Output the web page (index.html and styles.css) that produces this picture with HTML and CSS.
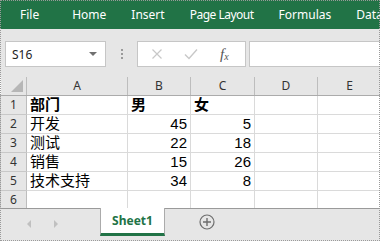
FILE: index.html
```html
<!DOCTYPE html>
<html lang="en">
<head>
	<meta charset="UTF-8">
	<title>Sheet1</title>
	<link rel="stylesheet" href="styles.css">
</head>
<body>
<div class="app">
	<nav class="ribbon">
		<span class="menu file">File</span>
		<span class="menu">Home</span>
		<span class="menu">Insert</span>
		<span class="menu tight">Page Layout</span>
		<span class="menu">Formulas</span>
		<span class="menu">Data</span>
	</nav>
	<section class="formula">
		<div class="namebox">
			<span>S16</span>
			<span class="caret"></span>
		</div>
		<div class="grip">
			<i></i><i></i><i></i>
		</div>
		<div class="fxbox">
			<svg width="12" height="12" viewBox="0 0 12 12"><path d="M1.5 1.5 L10.5 10.5 M10.5 1.5 L1.5 10.5" stroke="#c8c8c8" stroke-width="1.2" fill="none"/></svg>
			<svg width="14" height="12" viewBox="0 0 14 12"><path d="M1 6.5 L5 10.5 L13 1.5" stroke="#c8c8c8" stroke-width="1.4" fill="none"/></svg>
			<span class="fx">f<sub>x</sub></span>
		</div>
		<div class="input"></div>
	</section>
	<table class="sheet">
		<colgroup>
			<col class="c-row">
			<col class="c-a">
			<col class="c-b">
			<col class="c-c">
			<col class="c-d">
			<col class="c-e">
		</colgroup>
		<tr class="head">
			<th class="corner"><span class="tri"></span></th>
			<th>A</th><th>B</th><th>C</th><th>D</th><th>E</th>
		</tr>
		<tr>
			<th>1</th><td class="b">部门</td><td class="b">男</td><td class="b">女</td><td></td><td></td>
		</tr>
		<tr>
			<th>2</th><td>开发</td><td class="n">45</td><td class="n">5</td><td></td><td></td>
		</tr>
		<tr>
			<th>3</th><td>测试</td><td class="n">22</td><td class="n">18</td><td></td><td></td>
		</tr>
		<tr>
			<th>4</th><td>销售</td><td class="n">15</td><td class="n">26</td><td></td><td></td>
		</tr>
		<tr>
			<th>5</th><td>技术支持</td><td class="n">34</td><td class="n">8</td><td></td><td></td>
		</tr>
		<tr class="last">
			<th>6</th><td></td><td></td><td></td><td></td><td></td>
		</tr>
	</table>
	<footer class="tabs">
		<div class="arrows">
			<span class="arrow left"></span>
			<span class="arrow right"></span>
		</div>
		<div class="tab">Sheet1</div>
		<div class="add">
			<svg width="16" height="16" viewBox="0 0 16 16"><circle cx="8" cy="8" r="7" stroke="#6e6e6e" stroke-width="1.2" fill="none"/><path d="M8 4 V12 M4 8 H12" stroke="#6e6e6e" stroke-width="1.4"/></svg>
		</div>
	</footer>
</div>
</body>
</html>
```

FILE: styles.css
```css
body{
	margin: 0;
	font-family: "Noto Sans", "Liberation Sans", sans-serif;
}
.app{
	width: 380px;
	height: 241px;
	overflow: hidden;
	background-color: #e6e6e6;
	outline: 1px dotted #9a9a9a;
	outline-offset: -1px;
}
.ribbon{
	height: 29px;
	background-color: #217346;
	color: #fff;
	display: flex;
	align-items: center;
	font-size: 12px;
	white-space: nowrap;
	padding-left: 20px;
	gap: 25px;
}
.ribbon .file{
	margin-right: 8px;
}
.ribbon .tight{
	letter-spacing: -0.5px;
}
.formula{
	height: 48px;
	box-sizing: border-box;
	padding-top: 12px;
	display: flex;
	align-items: flex-start;
}
.namebox{
	margin-left: 5px;
	width: 101px;
	height: 26px;
	box-sizing: border-box;
	border: 1px solid #c6c6c6;
	background-color: #fff;
	display: flex;
	align-items: center;
	justify-content: space-between;
	padding: 0 8px 0 6px;
	font-size: 12px;
	color: #222;
}
.caret{
	width: 0;
	height: 0;
	border-left: 4px solid transparent;
	border-right: 4px solid transparent;
	border-top: 4px solid #707070;
}
.grip{
	width: 31px;
	height: 26px;
	display: flex;
	flex-direction: column;
	align-items: center;
	justify-content: center;
	gap: 2px;
}
.grip i{
	width: 2px;
	height: 2px;
	background-color: #9a9a9a;
}
.fxbox{
	width: 109px;
	height: 26px;
	box-sizing: border-box;
	border: 1px solid #c6c6c6;
	background-color: #fff;
	display: flex;
	align-items: center;
	padding-left: 13px;
	gap: 21px;
}
.fx{
	font-family: "Liberation Serif", serif;
	font-style: italic;
	font-size: 15px;
	color: #555;
	margin-left: 1px;
}
.fx sub{
	font-size: 10px;
	vertical-align: -1px;
}
.input{
	margin-left: 3px;
	flex: 1;
	height: 26px;
	box-sizing: border-box;
	border: 1px solid #c6c6c6;
	border-right: none;
	background-color: #fff;
}
.sheet{
	border-collapse: collapse;
	table-layout: fixed;
	width: 381px;
	background-color: #fff;
}
.c-row{ width: 26px; }
.c-a{ width: 101px; }
.c-b{ width: 63px; }
.c-c{ width: 64px; }
.c-d{ width: 63px; }
.c-e{ width: 64px; }
.sheet td, .sheet th{
	border: 1px solid #dadada;
	height: 19px;
	padding: 0 3px;
	box-sizing: border-box;
	overflow: hidden;
	white-space: nowrap;
}
.sheet tr:first-child th{
	border-top: none;
}
.sheet th{
	background-color: #e6e6e6;
	font-weight: normal;
	font-size: 12px;
	color: #333;
	border-color: #c8c8c8;
	border-right-color: #bdbdbd;
}
.sheet tr.head th{
	height: 18px;
	border-bottom: 1px solid #ababab;
	text-align: center;
}
.sheet th.corner{
	position: relative;
	border-left: none;
}
.tri{
	position: absolute;
	right: 3px;
	bottom: 3px;
	width: 0;
	height: 0;
	border-left: 12px solid transparent;
	border-bottom: 12px solid #b6b6b6;
}
.sheet td{
	font-size: 15px;
	color: #000;
	font-family: "Liberation Sans", "Noto Sans CJK SC", sans-serif;
	line-height: 18px;
}
.sheet td.b{
	font-weight: bold;
}
.sheet td.n{
	text-align: right;
}
.sheet tr.last th, .sheet tr.last td{
	height: 17px;
	border-bottom: none;
	vertical-align: top;
}
.tabs{
	height: 30px;
	border-top: 1px solid #9a9a9a;
	display: flex;
	align-items: stretch;
}
.arrows{
	width: 100px;
	display: flex;
	align-items: center;
	padding-left: 27px;
	gap: 23px;
	box-sizing: border-box;
}
.arrow{
	width: 0;
	height: 0;
	border-top: 4px solid transparent;
	border-bottom: 4px solid transparent;
}
.arrow.left{
	border-right: 4px solid #c0c0c0;
}
.arrow.right{
	border-left: 4px solid #c0c0c0;
}
.tab{
	width: 63px;
	margin-top: -1px;
	height: 25px;
	background-color: #fff;
	border-left: 1px solid #ababab;
	border-right: 1px solid #ababab;
	border-bottom: 3px solid #217346;
	color: #217346;
	font-weight: bold;
	font-size: 12px;
	display: flex;
	align-items: center;
	justify-content: center;
}
.add{
	margin-left: 34px;
	display: flex;
	align-items: center;
	height: 27px;
}
```
